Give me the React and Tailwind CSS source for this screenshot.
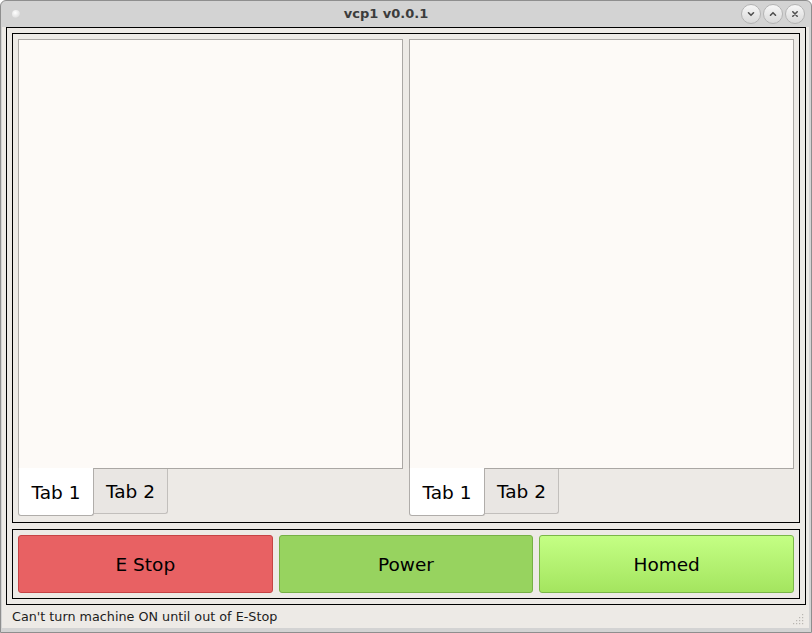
import React from 'react';

const font = { fontFamily: '"DejaVu Sans", "Liberation Sans", sans-serif' };

function TitleButton({ kind }) {
  return (
    <div className="w-[20px] h-[20px] rounded-full border border-[#b4b4b4] bg-gradient-to-b from-[#f7f7f7] to-[#d9d9d9] flex items-center justify-center">
      <svg width="10" height="10" viewBox="0 0 10 10" fill="none" stroke="#505050" strokeWidth="1.6" strokeLinecap="round" strokeLinejoin="round">
        {kind === 'min' && <path d="M2.5 3.8 L5 6.3 L7.5 3.8" />}
        {kind === 'max' && <path d="M2.5 6.2 L5 3.7 L7.5 6.2" />}
        {kind === 'close' && <path d="M2.8 2.8 L7.2 7.2 M7.2 2.8 L2.8 7.2" />}
      </svg>
    </div>
  );
}

function TabPanel() {
  return (
    <div className="flex-1 flex flex-col">
      <div className="flex-1 bg-[#fdfaf7] border border-[#aaa7a4]" />
      <div className="flex items-start">
        <div className="-mt-px w-[76px] h-[48px] pt-[2px] bg-white border-l border-r border-b border-[#b0adaa] rounded-b-[3px] flex items-center justify-center text-[18.5px] text-black">
          Tab 1
        </div>
        <div className="w-[74px] h-[45px] pt-px bg-[#e9e6e3] border-r border-b border-[#c2bfbc] rounded-br-[3px] flex items-center justify-center text-[18.5px] text-black">
          Tab 2
        </div>
      </div>
    </div>
  );
}

function ResizeGrip() {
  const dots = [];
  for (let r = 0; r < 4; r++) {
    for (let c = 0; c < 4; c++) {
      if (r + c >= 3) dots.push(<rect key={`${r}-${c}`} x={c * 3} y={r * 3} width="1.2" height="1.2" fill="#b9b6b1" />);
    }
  }
  return (
    <svg width="12" height="12" viewBox="0 0 12 12">
      {dots}
    </svg>
  );
}

export default function App() {
  return (
    <div className="w-[812px] h-[633px] bg-[#d3d3d3] border border-[#8e8e8e] rounded-t-[6px] flex flex-col overflow-hidden" style={font}>
      {/* title bar */}
      <div className="h-[26px] flex items-center shrink-0">
        <div className="w-[30px] pl-[11px] flex items-center">
          <div className="w-[8px] h-[8px] rounded-full bg-[radial-gradient(circle_at_40%_35%,#ffffff,#e4e4e4_60%,#b8b8b8)]" />
        </div>
        <div className="flex-1 text-center text-[13px] font-bold text-[#3c3c3c]">vcp1 v0.0.1</div>
        <div className="flex items-center gap-[2px] pr-[6px]">
          <TitleButton kind="min" />
          <TitleButton kind="max" />
          <TitleButton kind="close" />
        </div>
      </div>

      {/* client */}
      <div className="flex-1 ml-px mr-[2px] mb-[4px] bg-[#edeae6] flex flex-col pl-[4px] pr-[3px]">
        <div className="h-[578px] border border-black p-[5px] flex flex-col gap-[6px]">
          <div className="flex-1 border border-black pt-[5px] px-[5px] pb-[6px] flex gap-[6px]">
            <TabPanel />
            <TabPanel />
          </div>
          <div className="h-[70px] border border-black p-[5px] flex gap-[6px]">
            <button className="flex-1 pt-[2px] rounded-[3px] border border-[#c64345] bg-[#e86163] text-[18.5px] text-black">E Stop</button>
            <button className="flex-1 pt-[2px] rounded-[3px] border border-[#76b045] bg-[#97d35f] text-[18.5px] text-black">Power</button>
            <button className="flex-1 pt-[2px] rounded-[3px] border border-[#7ab748] bg-gradient-to-b from-[#c4ff84] to-[#a4e55f] text-[18.5px] text-black">Homed</button>
          </div>
        </div>
        <div className="flex-1 flex items-center justify-between pl-[6px]">
          <span className="text-[12.75px] text-[#1c1c1c]">Can't turn machine ON until out of E-Stop</span>
          <div className="self-end mb-[2px] mr-[1px]">
            <ResizeGrip />
          </div>
        </div>
      </div>
    </div>
  );
}
